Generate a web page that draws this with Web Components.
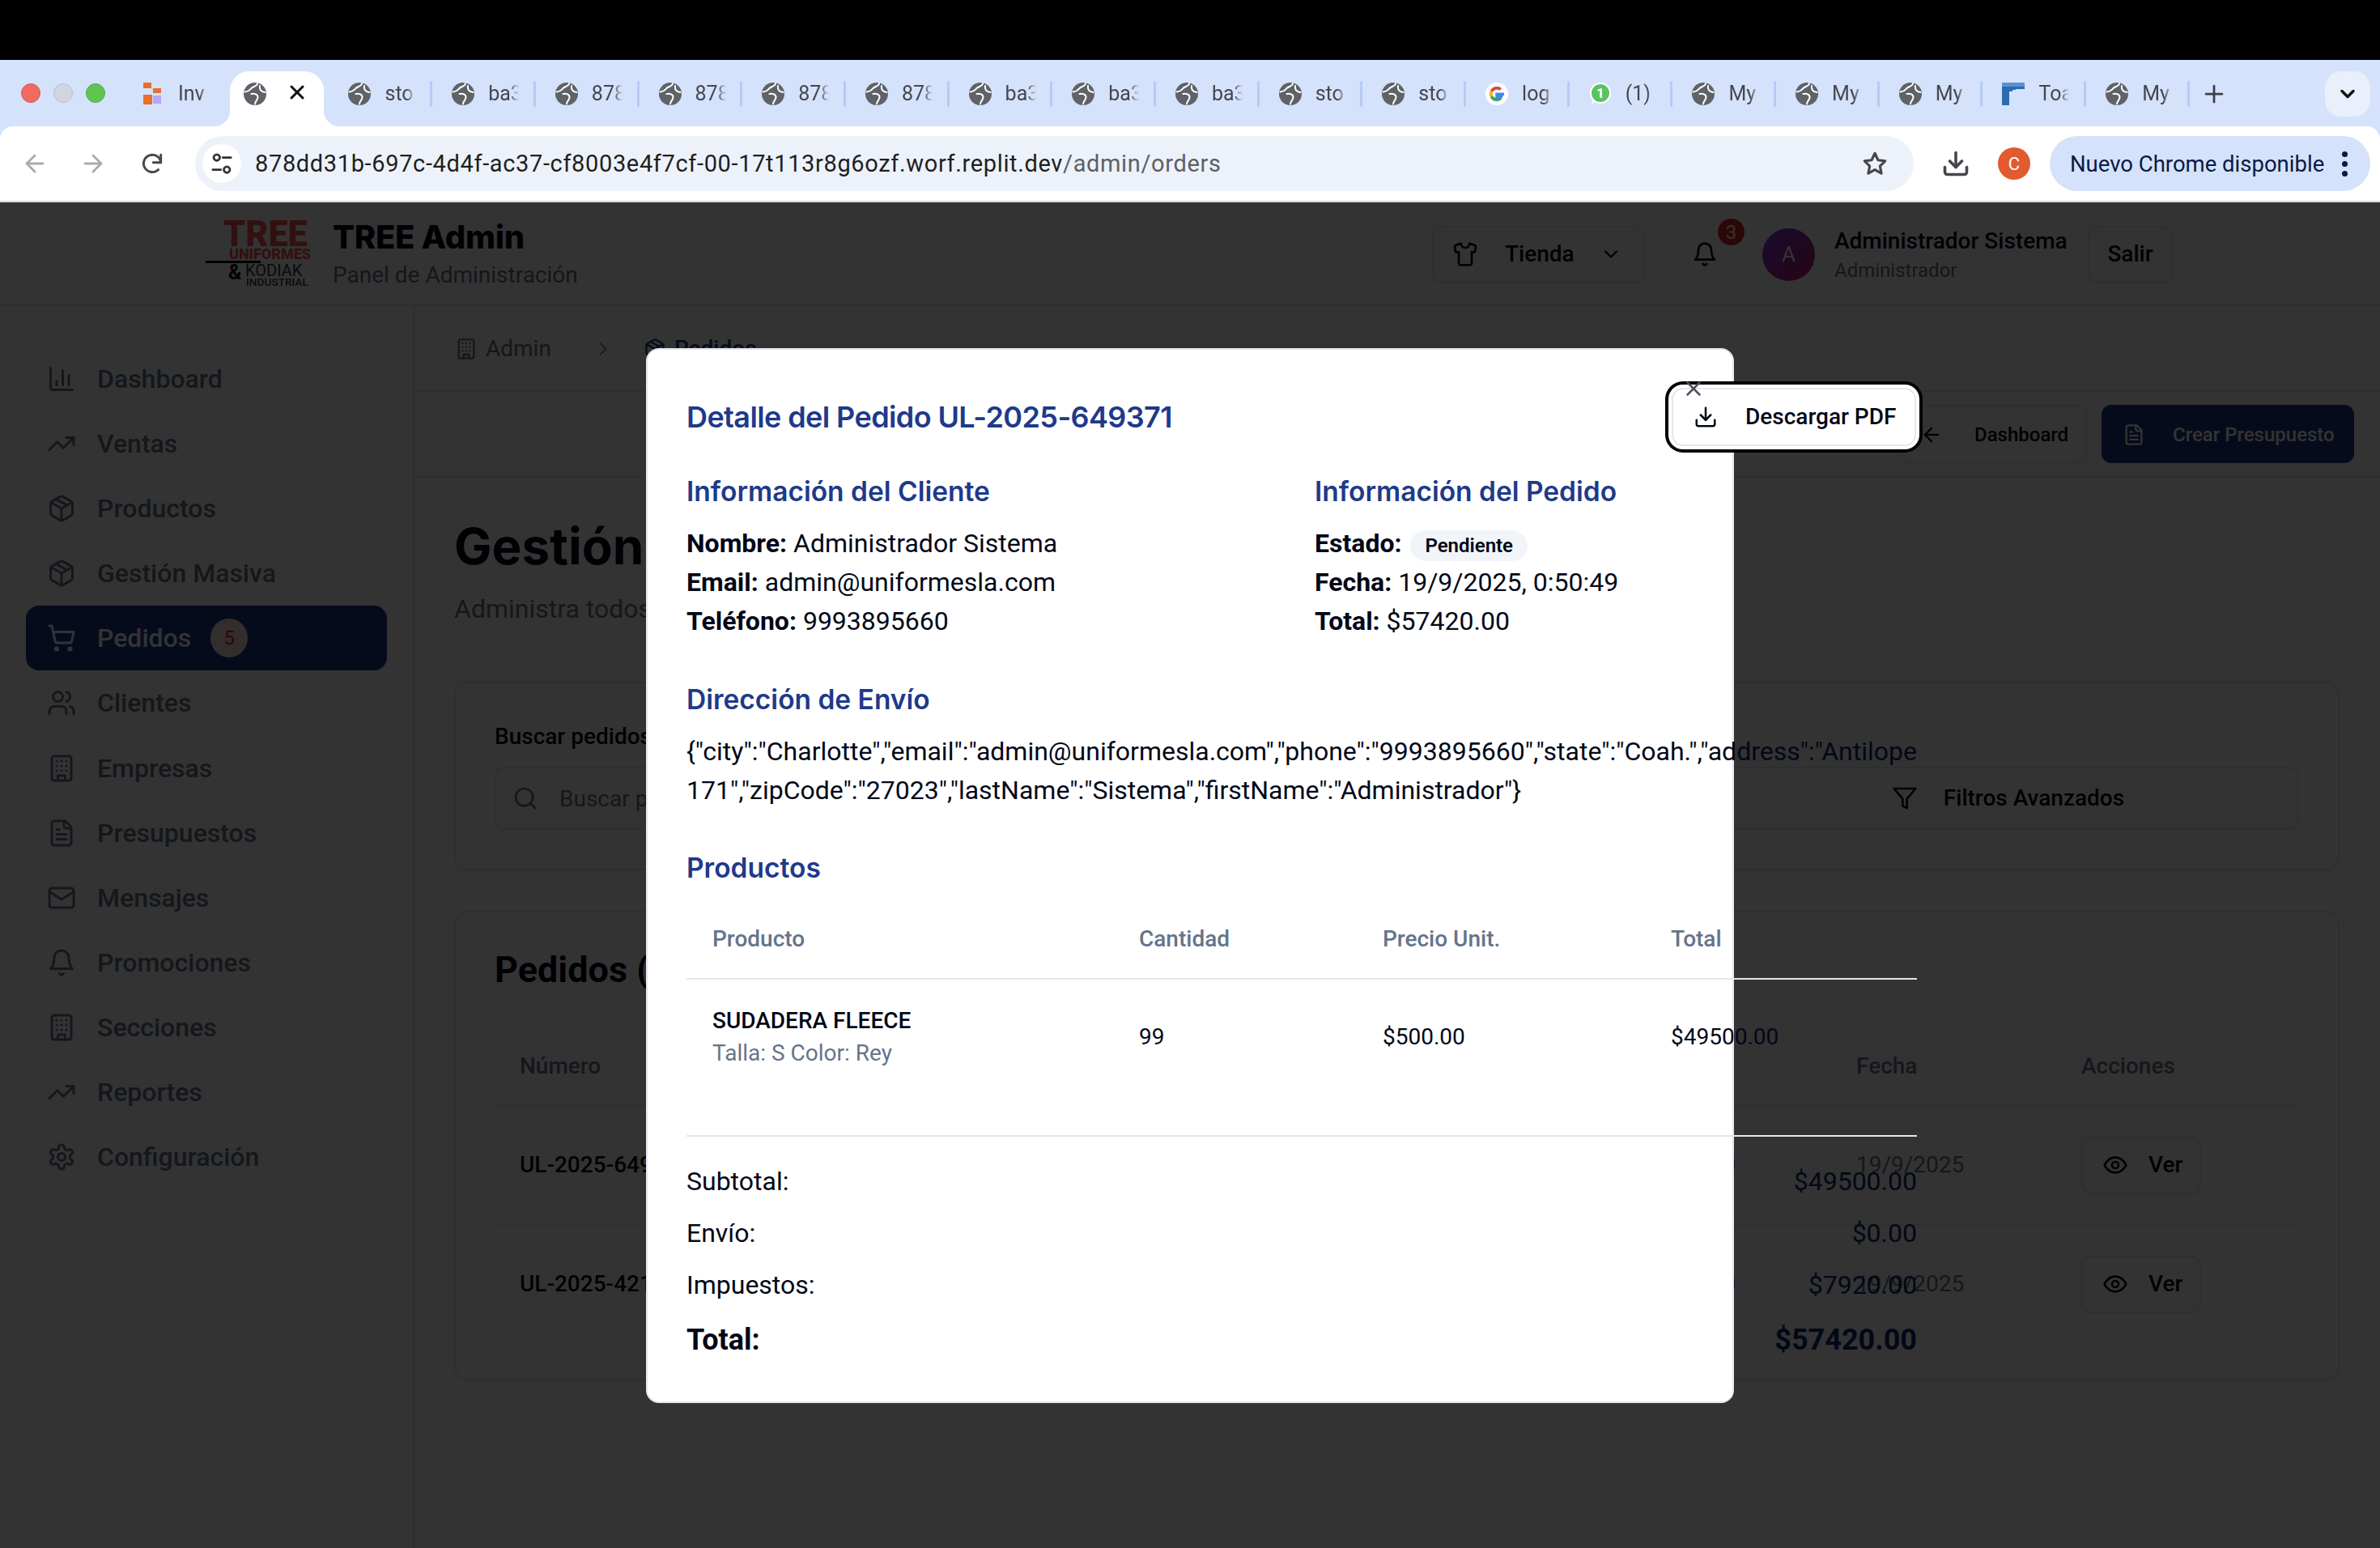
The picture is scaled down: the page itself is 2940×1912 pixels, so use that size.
<!DOCTYPE html>
<html lang="es">
<head>
<meta charset="utf-8">
<title>Pedidos</title>
<style>
  html, body { margin: 0; height: 100%; background: #000; overflow: hidden; }
  body { font-family: Roboto, "Liberation Sans", sans-serif; width: 2940px; height: 1912px; position: relative; }
  .top-black { height: 74px; background: #000; }
</style>
</head>
<body>
<div class="top-black"></div>
<browser-chrome></browser-chrome>
<admin-app></admin-app>
<order-dialog></order-dialog>

<script>
(function () {

  const ICONS = {
    chart: '<path d="M3 3v16a2 2 0 0 0 2 2h16"/><path d="M18 17V9"/><path d="M13 17V5"/><path d="M8 17v-3"/>',
    trending: '<polyline points="22 7 13.5 15.5 8.5 10.5 2 17"/><polyline points="16 7 22 7 22 13"/>',
    package: '<path d="M7.5 4.27l9 5.15"/><path d="M21 8a2 2 0 0 0-1-1.73l-7-4a2 2 0 0 0-2 0l-7 4A2 2 0 0 0 3 8v8a2 2 0 0 0 1 1.73l7 4a2 2 0 0 0 2 0l7-4A2 2 0 0 0 21 16Z"/><path d="m3.3 7 8.7 5 8.7-5"/><path d="M12 22V12"/>',
    cart: '<circle cx="8" cy="21" r="1"/><circle cx="19" cy="21" r="1"/><path d="M2.05 2.05h2l2.66 12.42a2 2 0 0 0 2 1.58h9.78a2 2 0 0 0 1.95-1.57l1.65-7.43H5.12"/>',
    users: '<path d="M16 21v-2a4 4 0 0 0-4-4H6a4 4 0 0 0-4 4v2"/><circle cx="9" cy="7" r="4"/><path d="M22 21v-2a4 4 0 0 0-3-3.87"/><path d="M16 3.13a4 4 0 0 1 0 7.75"/>',
    building: '<rect x="4" y="2" width="16" height="20" rx="2"/><path d="M9 22v-4h6v4"/><path d="M8 6h.01M16 6h.01M12 6h.01M12 10h.01M12 14h.01M16 10h.01M16 14h.01M8 10h.01M8 14h.01"/>',
    file: '<path d="M15 2H6a2 2 0 0 0-2 2v16a2 2 0 0 0 2 2h12a2 2 0 0 0 2-2V7Z"/><path d="M14 2v4a2 2 0 0 0 2 2h4"/><path d="M10 9H8"/><path d="M16 13H8"/><path d="M16 17H8"/>',
    mail: '<rect x="2" y="4" width="20" height="16" rx="2"/><path d="m22 7-8.97 5.7a1.94 1.94 0 0 1-2.06 0L2 7"/>',
    bell: '<path d="M6 8a6 6 0 0 1 12 0c0 7 3 9 3 9H3s3-2 3-9"/><path d="M10.3 21a1.94 1.94 0 0 0 3.4 0"/>',
    gear: '<path d="M12.22 2h-.44a2 2 0 0 0-2 2v.18a2 2 0 0 1-1 1.73l-.43.25a2 2 0 0 1-2 0l-.15-.08a2 2 0 0 0-2.73.73l-.22.38a2 2 0 0 0 .73 2.73l.15.1a2 2 0 0 1 1 1.72v.51a2 2 0 0 1-1 1.74l-.15.09a2 2 0 0 0-.73 2.73l.22.38a2 2 0 0 0 2.73.73l.15-.08a2 2 0 0 1 2 0l.43.25a2 2 0 0 1 1 1.73V20a2 2 0 0 0 2 2h.44a2 2 0 0 0 2-2v-.18a2 2 0 0 1 1-1.73l.43-.25a2 2 0 0 1 2 0l.15.08a2 2 0 0 0 2.73-.73l.22-.39a2 2 0 0 0-.73-2.73l-.15-.08a2 2 0 0 1-1-1.74v-.5a2 2 0 0 1 1-1.74l.15-.09a2 2 0 0 0 .73-2.73l-.22-.38a2 2 0 0 0-2.73-.73l-.15.08a2 2 0 0 1-2 0l-.43-.25a2 2 0 0 1-1-1.73V4a2 2 0 0 0-2-2z"/><circle cx="12" cy="12" r="3"/>',
    shirt: '<path d="M20.38 3.46 16 2a4 4 0 0 1-8 0L3.62 3.46a2 2 0 0 0-1.34 2.23l.58 3.47a1 1 0 0 0 .99.84H6v10c0 1.1.9 2 2 2h8a2 2 0 0 0 2-2V10h2.15a1 1 0 0 0 .99-.84l.58-3.47a2 2 0 0 0-1.34-2.23z"/>',
    search: '<circle cx="11" cy="11" r="8"/><path d="m21 21-4.3-4.3"/>',
    filter: '<polygon points="22 3 2 3 10 12.46 10 19 14 21 14 12.46 22 3"/>',
    eye: '<path d="M2 12s3-7 10-7 10 7 10 7-3 7-10 7-10-7-10-7Z"/><circle cx="12" cy="12" r="3"/>',
    download: '<path d="M21 15v4a2 2 0 0 1-2 2H5a2 2 0 0 1-2-2v-4"/><polyline points="7 10 12 15 17 10"/><line x1="12" y1="15" x2="12" y2="3"/>',
    arrowLeft: '<path d="m12 19-7-7 7-7"/><path d="M19 12H5"/>',
    arrowRight: '<path d="M5 12h14"/><path d="m12 5 7 7-7 7"/>',
    chevronRight: '<path d="m9 18 6-6-6-6"/>',
    chevronDown: '<path d="m6 9 6 6 6-6"/>',
    x: '<path d="M18 6 6 18"/><path d="m6 6 12 12"/>',
    reload: '<path d="M20 11a8 8 0 1 0-2.3 6.6"/><path d="M20 4v7h-7"/>',
    star: '<polygon points="12 3 14.8 9 21 9.8 16.5 14.2 17.7 20.6 12 17.4 6.3 20.6 7.5 14.2 3 9.8 9.2 9"/>',
    tune: '<circle cx="7" cy="6" r="3"/><path d="M13 6h8"/><circle cx="17" cy="18" r="3"/><path d="M3 18h8"/>',
    plus: '<path d="M12 4v16"/><path d="M4 12h16"/>'
  };

  class UiIcon extends HTMLElement {
    connectedCallback() {
      const size = this.getAttribute('size') || 36;
      const stroke = this.getAttribute('stroke') || 2;
      const root = this.shadowRoot || this.attachShadow({ mode: 'open' });
      root.innerHTML = `<style>:host{display:inline-flex;flex:none;line-height:0}</style>
        <svg width="${size}" height="${size}" viewBox="0 0 24 24" fill="none" stroke="currentColor"
          stroke-width="${stroke}" stroke-linecap="round" stroke-linejoin="round">${ICONS[this.getAttribute('name')] || ''}</svg>`;
    }
  }
  customElements.define('ui-icon', UiIcon);

  const tabTemplate = document.createElement('template');
  tabTemplate.innerHTML = `
  <style>
    :host { display: flex; flex: none; width: 127.7px; height: 68px; align-items: center; padding: 0 3px 12px 21px; box-sizing: border-box; color: #44474c; }
    :host([active]) { width: 116px; margin: 0 9.8px 0 2px; padding-left: 17px; background: #fff; border-radius: 24px 24px 0 0; position: relative; color: #111; }
    :host([active])::before, :host([active])::after { content: ""; position: absolute; bottom: 0; width: 20px; height: 20px; }
    :host([active])::before { left: -20px; background: radial-gradient(circle at 0 0, transparent 20px, #fff 20.5px); }
    :host([active])::after { right: -20px; background: radial-gradient(circle at 100% 0, transparent 20px, #fff 20.5px); }
    .fav { width: 28px; height: 28px; flex: none; }
    .label { flex: none; width: 38px; margin-left: 17px; overflow: hidden; white-space: nowrap; font: 400 25px/32px Roboto, sans-serif;
      -webkit-mask-image: linear-gradient(90deg, #000 70%, transparent); mask-image: linear-gradient(90deg, #000 70%, transparent); }
    .sep { width: 3px; height: 32px; margin-left: auto; background: #b4cbf5; border-radius: 2px; }
    :host([nosep]) .sep, :host([active]) .sep { display: none; }
    :host([active]) .label { display: none; }
    .close { margin-left: 24px; color: #111; }
  </style>
  <span class="fav"></span><span class="label"><slot></slot></span><span class="close" hidden></span><span class="sep"></span>
  `;

  const FAVICONS = {
    globe: '<circle cx="14" cy="14" r="14" fill="#5f6368"/><path d="M17 1c-.5 4-5 3.500-7.500 6S7 11 1.500 11.500M9.500 14c4-1 8 .5 8 4s-3 4-3.500 8.500M20 4c-.5 4 1 7.500 6.500 8" fill="none" stroke="#fff" stroke-width="2" stroke-linecap="round"/>',
    replit: '<rect x="2" y="0" width="10" height="7" fill="#e86f2c"/><rect x="14" y="7" width="10" height="6" fill="#e86f2c"/><rect x="2" y="15" width="11" height="12" fill="#e86f2c"/><rect x="14" y="16" width="10" height="10" fill="#b7a7f5"/>',
    google: '<circle cx="14" cy="14" r="14" fill="#fff"/><path d="M23 14.300h-9v3.500h5.200c-.8 2.200-2.800 3.500-5.200 3.500a7.300 7.300 0 1 1 4.700-12.900" fill="none" stroke="#4285f4" stroke-width="3.500"/><path d="M18.700 8.400A7.300 7.300 0 0 0 7.700 10.500" fill="none" stroke="#ea4335" stroke-width="3.500"/><path d="M7.700 10.500a7.300 7.300 0 0 0 0 7" fill="none" stroke="#fbbc05" stroke-width="3.500"/><path d="M7.700 17.500a7.300 7.300 0 0 0 11 1.500" fill="none" stroke="#34a853" stroke-width="3.500"/>',
    whatsapp: '<circle cx="14" cy="13" r="13" fill="#fff"/><path d="M3 27l2-6h6z" fill="#fff"/><circle cx="14" cy="13" r="11" fill="#59c35f"/><text x="14" y="19" font-family="Roboto" font-size="17" font-weight="700" text-anchor="middle" fill="#fff">1</text>',
    toast: '<rect x="0" y="0" width="28" height="28" fill="#2b6cb0"/><path d="M9 28V11h4v-2h4v-1h11v20z" fill="#d5e2fb"/><rect x="0" y="0" width="28" height="5" fill="#5a93cf"/>'
  };

  class BrowserTab extends HTMLElement {
    constructor() {
      super();
      this.attachShadow({ mode: 'open' });
      this.shadowRoot.appendChild(tabTemplate.content.cloneNode(true));
    }
    connectedCallback() {
      const name = this.getAttribute('favicon') || 'globe';
      this.shadowRoot.querySelector('.fav').innerHTML = `<svg width="28" height="28" viewBox="0 0 28 28">${FAVICONS[name]}</svg>`;
      if (this.hasAttribute('active')) {
        const close = this.shadowRoot.querySelector('.close');
        close.hidden = false;
        close.innerHTML = '<ui-icon name="x" size="28" stroke="2.600"></ui-icon>';
      }
    }
  }
  customElements.define('browser-tab', BrowserTab);

  const chromeTemplate = document.createElement('template');
  chromeTemplate.innerHTML = `
  <style>
    :host { display: block; background: #d5e2fb; font-family: Roboto, "Liberation Sans", sans-serif; }
    .strip { display: flex; height: 82px; align-items: flex-end; padding-left: 154px; position: relative; }
    .lights { position: absolute; left: 26px; top: 29px; display: flex; gap: 16px; }
    .lights i { width: 24px; height: 24px; border-radius: 50%; display: block; box-sizing: border-box; }
    .add { display: flex; align-items: center; height: 68px; padding: 0 0 12px 12px; box-sizing: border-box; color: #3c3f44; }
    .more { margin-left: auto; margin-right: 12px; align-self: flex-start; margin-top: 14px; width: 56px; height: 56px; border-radius: 20px; background: #e9effb; display: flex; align-items: center; justify-content: center; color: #111; }
    .bar { height: 92px; background: #fff; border-radius: 16px 16px 0 0; display: flex; align-items: center; padding: 0 12px 0 26px; position: relative; box-sizing: border-box; }
    .nav { display: flex; gap: 38px; align-items: center; margin-right: 37px; }
    .nav ui-icon:nth-child(-n+2) { color: #a9abae; }
    .nav ui-icon:nth-child(3) { color: #45474b; margin-left: 2px; }
    .omni { width: 2123px; height: 68px; background: #edf2fa; border-radius: 34px; display: flex; align-items: center; box-sizing: border-box; padding: 0 31px 0 9px; flex: none; }
    .site { width: 48px; height: 48px; border-radius: 50%; background: #fff; display: flex; align-items: center; justify-content: center; color: #333; flex: none; }
    .url { margin-left: 17px; font-size: 29px; color: #1f1f1f; white-space: nowrap; letter-spacing: .64px; }
    .url span { color: #5d6064; }
    .star { margin-left: auto; color: #45474b; }
    .dl { margin-left: 34px; color: #45474b; }
    .avatar { margin-left: 34px; width: 40px; height: 40px; border-radius: 50%; background: #e25b2e; color: #fff; font-size: 22px; display: flex; align-items: center; justify-content: center; flex: none; }
    .update { margin-left: 24px; width: 396px; height: 68px; border-radius: 34px; background: #d5e2fb; color: #0a1a44; display: flex; align-items: center; font-size: 27.500px; padding-left: 25px; box-sizing: border-box; white-space: nowrap; flex: none; }
    .dots { margin-left: 22px; display: grid; gap: 5px; }
    .dots i { width: 7px; height: 7px; border-radius: 50%; background: #0a1a44; display: block; }
    .rule { height: 2px; background: #d8d8d8; }
  </style>
  <div class="strip">
    <div class="lights">
      <i style="background:#ef6b60;border:1px solid #d9574d"></i>
      <i style="background:#d0d5df;border:1px solid #b9bec9"></i>
      <i style="background:#5fc454;border:1px solid #4fae45"></i>
    </div>
    <browser-tab favicon="replit" nosep>Inv</browser-tab>
    <browser-tab active></browser-tab>
    <browser-tab>sto</browser-tab>
    <browser-tab>ba3f</browser-tab>
    <browser-tab>878d</browser-tab>
    <browser-tab>878d</browser-tab>
    <browser-tab>878d</browser-tab>
    <browser-tab>878d</browser-tab>
    <browser-tab>ba3f</browser-tab>
    <browser-tab>ba3f</browser-tab>
    <browser-tab>ba3f</browser-tab>
    <browser-tab>sto</browser-tab>
    <browser-tab>sto</browser-tab>
    <browser-tab favicon="google">log</browser-tab>
    <browser-tab favicon="whatsapp">(1)</browser-tab>
    <browser-tab>My</browser-tab>
    <browser-tab>My</browser-tab>
    <browser-tab>My</browser-tab>
    <browser-tab favicon="toast">Toa</browser-tab>
    <browser-tab>My</browser-tab>
    <div class="add"><ui-icon name="plus" size="30" stroke="2.200"></ui-icon></div>
    <div class="more"><ui-icon name="chevronDown" size="28" stroke="3"></ui-icon></div>
  </div>
  <div class="bar">
    <div class="nav">
      <ui-icon name="arrowLeft" size="34" stroke="2"></ui-icon>
      <ui-icon name="arrowRight" size="34" stroke="2"></ui-icon>
      <ui-icon name="reload" size="32" stroke="2.200"></ui-icon>
    </div>
    <div class="omni">
      <div class="site"><ui-icon name="tune" size="30" stroke="2.200"></ui-icon></div>
      <div class="url">878dd31b-697c-4d4f-ac37-cf8003e4f7cf-00-17t113r8g6ozf.worf.replit.dev<span>/admin/orders</span></div>
      <ui-icon class="star" name="star" size="34" stroke="2.200"></ui-icon>
    </div>
    <ui-icon class="dl" name="download" size="36" stroke="2.400"></ui-icon>
    <div class="avatar">C</div>
    <div class="update">Nuevo Chrome disponible<div class="dots"><i></i><i></i><i></i></div></div>
  </div>
  <div class="rule"></div>
  `;

  class BrowserChrome extends HTMLElement {
    constructor() {
      super();
      this.attachShadow({ mode: 'open' });
      this.shadowRoot.appendChild(chromeTemplate.content.cloneNode(true));
    }
  }
  customElements.define('browser-chrome', BrowserChrome);

  const logoTemplate = document.createElement('template');
  logoTemplate.innerHTML = `
  <style>
    :host { display: block; position: relative; width: 134px; height: 82px; font-family: Roboto, sans-serif; flex: none; }
    span { position: absolute; white-space: nowrap; transform-origin: 0 0; line-height: 1; }
    .tree { left: 22px; top: -6px; font-size: 45px; font-weight: 900; color: #ff4f4f; transform: scaleX(.96); }
    .uni { left: 29px; top: 32px; font-size: 19px; font-weight: 900; color: #ff4f4f; transform: scaleX(.945); }
    .rule { left: 0; top: 50px; width: 68px; height: 3px; background: #000; }
    .amp { left: 28px; top: 52px; font-size: 25px; font-weight: 700; color: #111; }
    .kod { left: 49px; top: 52px; font-size: 20px; font-weight: 400; color: #333; }
    .ind { left: 50px; top: 70px; font-size: 13px; font-weight: 500; color: #333; transform: scaleX(1.05); }
  </style>
  <span class="tree">TREE</span><span class="uni">UNIFORMES</span><span class="rule"></span>
  <span class="amp">&amp;</span><span class="kod">KODIAK</span><span class="ind">INDUSTRIAL</span>
  `;

  class TreeLogo extends HTMLElement {
    constructor() {
      super();
      this.attachShadow({ mode: 'open' });
      this.shadowRoot.appendChild(logoTemplate.content.cloneNode(true));
    }
  }
  customElements.define('tree-logo', TreeLogo);

  const buttonTemplate = document.createElement('template');
  buttonTemplate.innerHTML = `
  <style>
    :host { display: inline-flex; align-items: center; box-sizing: border-box; height: 70px; border: 2px solid #e2e8f0; border-radius: 12px; background: #fff; color: #020817; font: 500 28px/36px Roboto, sans-serif; white-space: nowrap; }
    :host([primary]) { background: #1e3a8a; border-color: #1e3a8a; color: #fff; }
  </style>
  <slot></slot>
  `;

  class UiButton extends HTMLElement {
    constructor() {
      super();
      this.attachShadow({ mode: 'open' });
      this.shadowRoot.appendChild(buttonTemplate.content.cloneNode(true));
    }
  }
  customElements.define('ui-button', UiButton);

  const headerTemplate = document.createElement('template');
  headerTemplate.innerHTML = `
  <style>
    :host { display: flex; height: 128px; box-sizing: border-box; border-bottom: 2px solid #e2e8f0; background: #fff; align-items: center; padding-left: 254px; color: #020817; }
    .brand { margin-left: 23px; }
    h1 { margin: 0; font: 800 40px/50px Inter, sans-serif; letter-spacing: -.3px; }
    p { margin: 4px 0 0; font: 400 28px/36px Roboto, sans-serif; color: #64748b; }
    .tools { margin-left: auto; display: flex; align-items: center; padding: 2px 256px 0 0; }
    .store { width: 263px; height: 71px; padding-left: 23px; gap: 33px; }
    .store ui-icon:last-child { margin-left: -2px; }
    .bell { margin-left: 58px; position: relative; display: flex; }
    .count { position: absolute; left: 32px; top: -28px; width: 33px; height: 33px; border-radius: 50%; background: #dc2626; color: #fff; font-size: 24px; display: flex; align-items: center; justify-content: center; }
    .avatar { margin-left: 55px; width: 65px; height: 65px; border-radius: 50%; background: linear-gradient(135deg, #7c3aed, #be185d); color: #fff; font-size: 26px; display: flex; align-items: center; justify-content: center; }
    .user { margin-left: 24px; width: 313px; margin-top: 2px; }
    .name { font: 500 28px/36px Roboto, sans-serif; }
    .role { font: 400 24px/32px Roboto, sans-serif; color: #64748b; margin-top: 2px; }
    .out { width: 105px; height: 71px; justify-content: center; }
  </style>
  <tree-logo></tree-logo>
  <div class="brand"><h1>TREE Admin</h1><p>Panel de Administración</p></div>
  <div class="tools">
    <ui-button class="store"><ui-icon name="shirt" size="32"></ui-icon><span>Tienda</span><ui-icon name="chevronDown" size="28"></ui-icon></ui-button>
    <div class="bell"><ui-icon name="bell" size="32"></ui-icon><span class="count">3</span></div>
    <div class="avatar">A</div>
    <div class="user"><div class="name">Administrador Sistema</div><div class="role">Administrador</div></div>
    <ui-button class="out">Salir</ui-button>
  </div>
  `;

  class AdminHeader extends HTMLElement {
    constructor() {
      super();
      this.attachShadow({ mode: 'open' });
      this.shadowRoot.appendChild(headerTemplate.content.cloneNode(true));
    }
  }
  customElements.define('admin-header', AdminHeader);

  const navItemTemplate = document.createElement('template');
  navItemTemplate.innerHTML = `
  <style>
    :host { display: flex; align-items: center; height: 80px; padding-left: 26px; gap: 26px; border-radius: 16px; color: #64748b; font: 500 32px/40px Roboto, sans-serif; }
    :host([active]) { background: #1e3a8a; color: #fff; }
    .ic { display: flex; }
    .badge { display: none; width: 46px; height: 48px; border-radius: 50%; background: #fee2e2; color: #dc2626; font-size: 24px; font-weight: 400; align-items: center; justify-content: center; margin-left: -2px; }
    :host([badge]) .badge { display: flex; }
  </style>
  <span class="ic"></span><slot></slot><span class="badge"></span>
  `;

  class NavItem extends HTMLElement {
    constructor() {
      super();
      this.attachShadow({ mode: 'open' });
      this.shadowRoot.appendChild(navItemTemplate.content.cloneNode(true));
    }
    connectedCallback() {
      this.shadowRoot.querySelector('.ic').innerHTML = `<ui-icon name="${this.getAttribute('icon')}" size="36"></ui-icon>`;
      this.shadowRoot.querySelector('.badge').textContent = this.getAttribute('badge') || '';
    }
  }
  customElements.define('nav-item', NavItem);

  const sidebarTemplate = document.createElement('template');
  sidebarTemplate.innerHTML = `
  <style>
    :host { display: block; box-sizing: border-box; border-right: 2px solid #e2e8f0; padding: 50px 32px 0; background: #fff; }
    nav { display: grid; gap: .1px; }
  </style>
  <nav>
    <nav-item icon="chart">Dashboard</nav-item>
    <nav-item icon="trending">Ventas</nav-item>
    <nav-item icon="package">Productos</nav-item>
    <nav-item icon="package">Gestión Masiva</nav-item>
    <nav-item icon="cart" active badge="5">Pedidos</nav-item>
    <nav-item icon="users">Clientes</nav-item>
    <nav-item icon="building">Empresas</nav-item>
    <nav-item icon="file">Presupuestos</nav-item>
    <nav-item icon="mail">Mensajes</nav-item>
    <nav-item icon="bell">Promociones</nav-item>
    <nav-item icon="building">Secciones</nav-item>
    <nav-item icon="trending">Reportes</nav-item>
    <nav-item icon="gear">Configuración</nav-item>
  </nav>
  `;

  class AdminSidebar extends HTMLElement {
    constructor() {
      super();
      this.attachShadow({ mode: 'open' });
      this.shadowRoot.appendChild(sidebarTemplate.content.cloneNode(true));
    }
  }
  customElements.define('admin-sidebar', AdminSidebar);

  const ordersTemplate = document.createElement('template');
  ordersTemplate.innerHTML = `
  <style>
    :host { display: block; background: #fff; color: #020817; min-width: 0; }
    .crumbs { height: 106px; box-sizing: border-box; border-bottom: 2px solid #e2e8f0; display: flex; align-items: center; padding: 2px 0 0 50px; font: 400 28px/36px Roboto, sans-serif; color: #64748b; }
    .crumbs ui-icon { margin-right: 10px; }
    .crumbs .sep { margin: 0 36px 0 50px; }
    .crumbs b { color: #1e3a8a; font-weight: 500; }
    .actions { height: 106px; box-sizing: border-box; border-bottom: 2px solid #e2e8f0; display: flex; align-items: center; justify-content: flex-end; gap: 18px; padding-right: 32px; }
    .actions ui-button { font-size: 24px; height: 72px; padding-top: 2px; }
    .back { width: 230px; padding-left: 22px; gap: 39px; }
    .quote { width: 312px; padding-left: 24px; gap: 34px; }
    .content { padding: 45px 50px 0 49px; }
    h1 { margin: 0; font: 700 62px/80px Inter, sans-serif; }
    .sub { margin: 13px 0 0; font: 400 32px/48px Roboto, sans-serif; color: #64748b; }
    .card { border: 2px solid #e2e8f0; border-radius: 16px; box-sizing: border-box; padding: 0 48px; }
    .filters { margin-top: 66px; height: 233px; padding-top: 46px; }
    .label { font: 500 28px/40px Roboto, sans-serif; }
    .row { display: grid; grid-template-columns: 1fr 722px; gap: 24px; margin-top: 17px; }
    .input, .filterbtn { height: 78px; border: 2px solid #e2e8f0; border-radius: 12px; box-sizing: border-box; display: flex; align-items: center; }
    .input { padding-left: 20px; gap: 26px; font-size: 28px; color: #64748b; }
    .filterbtn { justify-content: center; gap: 32px; padding-left: 3px; font: 500 28px/36px Roboto, sans-serif; }
    .list { margin-top: 50px; height: 580px; padding-top: 41px; }
    h2 { margin: 0; font: 700 45px/60px Roboto, sans-serif; }
    .tr { display: grid; box-sizing: border-box; grid-template-columns: 389px 500px 480px 282px 278px 302px; align-items: center; border-bottom: 2px solid #e2e8f0; height: 146px; font: 400 28px/36px Roboto, sans-serif; }
    .tr > * { padding-left: 31px; white-space: nowrap; }
    .th { height: 98px; margin-top: 41px; font-weight: 500; color: #64748b; }
    .tr.last { border-bottom: 0; }
    .num { font-weight: 500; }
    .date { color: #64748b; }
    .tr ui-button { padding-left: 24px; width: 148px; height: 71px; gap: 25px; }
  </style>
  <div class="crumbs"><ui-icon name="building" size="28"></ui-icon>Admin<ui-icon class="sep" name="chevronRight" size="28" stroke="1.500"></ui-icon><ui-icon name="package" size="28" style="color:#1e3a8a"></ui-icon><b>Pedidos</b></div>
  <div class="actions">
    <ui-button class="back"><ui-icon name="arrowLeft" size="28"></ui-icon>Dashboard</ui-button>
    <ui-button class="quote" primary><ui-icon name="file" size="28"></ui-icon>Crear Presupuesto</ui-button>
  </div>
  <div class="content">
    <h1>Gestión de Pedidos</h1>
    <p class="sub">Administra todos los pedidos de la tienda</p>
    <section class="card filters">
      <div class="label">Buscar pedidos</div>
      <div class="row">
        <div class="input"><ui-icon name="search" size="32"></ui-icon>Buscar por número o cliente...</div>
        <div class="filterbtn"><ui-icon name="filter" size="32"></ui-icon>Filtros Avanzados</div>
      </div>
    </section>
    <section class="card list">
      <h2>Pedidos (2)</h2>
      <div class="tr th"><span>Número</span><span>Cliente</span><span>Estado</span><span>Total</span><span>Fecha</span><span>Acciones</span></div>
      <div class="tr"><span class="num">UL-2025-649371</span><span>Administrador Sistema</span><span>Pendiente</span><span>$57420.00</span><span class="date">19/9/2025</span><span><ui-button><ui-icon name="eye" size="32"></ui-icon><span>Ver</span></ui-button></span></div>
      <div class="tr last"><span class="num">UL-2025-421806</span><span>Administrador Sistema</span><span>Pendiente</span><span>$28710.00</span><span class="date">19/9/2025</span><span><ui-button><ui-icon name="eye" size="32"></ui-icon><span>Ver</span></ui-button></span></div>
    </section>
  </div>
  `;

  class OrdersPage extends HTMLElement {
    constructor() {
      super();
      this.attachShadow({ mode: 'open' });
      this.shadowRoot.appendChild(ordersTemplate.content.cloneNode(true));
    }
  }
  customElements.define('orders-page', OrdersPage);

  const appTemplate = document.createElement('template');
  appTemplate.innerHTML = `
  <style>
    :host { display: block; position: relative; height: 1662px; background: #fff; overflow: hidden; }
    .body { display: grid; grid-template-columns: 512px 1fr; height: 1534px; }
    .scrim { position: absolute; inset: 0; background: rgba(0, 0, 0, .8); }
  </style>
  <admin-header></admin-header>
  <div class="body"><admin-sidebar></admin-sidebar><orders-page></orders-page></div>
  <div class="scrim"></div>
  `;

  class AdminApp extends HTMLElement {
    constructor() {
      super();
      this.attachShadow({ mode: 'open' });
      this.shadowRoot.appendChild(appTemplate.content.cloneNode(true));
    }
  }
  customElements.define('admin-app', AdminApp);

  const dialogTemplate = document.createElement('template');
  dialogTemplate.innerHTML = `
  <style>
    :host { display: block; position: absolute; left: 798px; top: 430px; width: 1344px; height: 1303px; box-sizing: border-box; background: #fff; border: 2px solid #e2e8f0; border-radius: 16px; padding: 47px 0 0 48px; color: #020817; font: 400 32px/47.500px Roboto, sans-serif; }
    .inner { width: 1520px; }
    header { display: flex; justify-content: space-between; align-items: center; height: 72px; }
    h2, h3 { margin: 0; font-family: Inter, sans-serif; color: #1e3a8a; font-weight: 600; }
    h2 { font-size: 36px; line-height: 44px; letter-spacing: -.6px; }
    h3 { font-size: 33.500px; line-height: 44px; }
    .pdf { height: 72px; width: 302px; margin-right: 1px; padding-left: 25px; box-shadow: 0 0 0 4px #fff, 0 0 0 8px #000; border-radius: 14px; font-size: 28px; }
    .pdf span { margin-left: 34px; }
    .close { position: absolute; left: 1277px; top: 33px; color: #50505a; }
    .info { display: grid; grid-template-columns: 776px 1fr; margin-top: 34px; }
    .lines { margin-top: 18px; line-height: 48px; }
    b { font-weight: 700; }
    .pill { display: inline-flex; align-items: center; height: 38px; padding: 0 18px; margin-left: 3px; border-radius: 19px; background: #f1f5f9; font-size: 24px; font-weight: 600; }
    .block { margin-top: 50px; }
    .info + .block { margin-top: 51px; }
    .addr { margin: 19px 0 0; }
    .table { margin-top: 18px; border-bottom: 2px solid #e2e8f0; height: 290px; font-size: 28px; line-height: 40px; }
    .tr { display: grid; grid-template-columns: 527px 301px 356px 336px; align-items: center; }
    .tr > * { padding-left: 32px; white-space: nowrap; }
    .th { height: 98px; box-sizing: border-box; border-bottom: 2px solid #e2e8f0; color: #64748b; font-weight: 500; }
    .td { height: 144px; margin-top: -1px; }
    .pname { font-weight: 500; }
    .muted { color: #64748b; }
    .sum { margin-top: 31px; display: grid; gap: 16px; line-height: 48px; }
    .sum div { display: flex; justify-content: space-between; }
    .sum .grand { font-size: 36px; font-weight: 700; line-height: 54px; margin-top: 1px; }
  </style>
  <ui-icon class="close" name="x" size="30" stroke="2"></ui-icon>
  <div class="inner">
    <header>
      <h2>Detalle del Pedido UL-2025-649371</h2>
      <ui-button class="pdf"><ui-icon name="download" size="30"></ui-icon><span>Descargar PDF</span></ui-button>
    </header>
    <div class="info">
      <section>
        <h3>Información del Cliente</h3>
        <div class="lines">
          <div><b>Nombre:</b> Administrador Sistema</div>
          <div><b>Email:</b> admin@uniformesla.com</div>
          <div><b>Teléfono:</b> 9993895660</div>
        </div>
      </section>
      <section>
        <h3>Información del Pedido</h3>
        <div class="lines">
          <div><b>Estado:</b> <span class="pill">Pendiente</span></div>
          <div><b>Fecha:</b> 19/9/2025, 0:50:49</div>
          <div><b>Total:</b> $57420.00</div>
        </div>
      </section>
    </div>
    <section class="block">
      <h3>Dirección de Envío</h3>
      <p class="addr">{"city":"Charlotte","email":"admin@uniformesla.com","phone":"9993895660","state":"Coah.","address":"Antilope 171","zipCode":"27023","lastName":"Sistema","firstName":"Administrador"}</p>
    </section>
    <section class="block">
      <h3>Productos</h3>
      <div class="table">
        <div class="tr th"><span>Producto</span><span>Cantidad</span><span>Precio Unit.</span><span>Total</span></div>
        <div class="tr td">
          <span><div class="pname">SUDADERA FLEECE</div><div class="muted">Talla: S Color: Rey</div></span>
          <span>99</span><span>$500.00</span><span>$49500.00</span>
        </div>
      </div>
    </section>
    <div class="sum">
      <div><span>Subtotal:</span><span>$49500.00</span></div>
      <div><span>Envío:</span><span>$0.00</span></div>
      <div><span>Impuestos:</span><span>$7920.00</span></div>
      <div class="grand"><span>Total:</span><span>$57420.00</span></div>
    </div>
  </div>
  `;

  class OrderDialog extends HTMLElement {
    constructor() {
      super();
      this.attachShadow({ mode: 'open' });
      this.shadowRoot.appendChild(dialogTemplate.content.cloneNode(true));
    }
  }
  customElements.define('order-dialog', OrderDialog);

})();
</script>
</body>
</html>
